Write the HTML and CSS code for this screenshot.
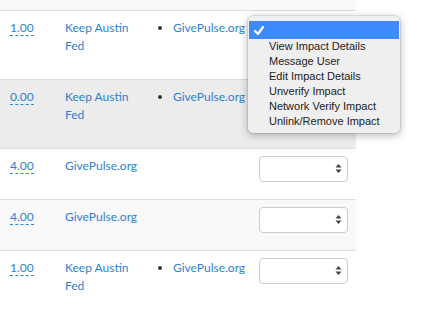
FILE: index.html
```html
<!DOCTYPE html>
<html lang="en">
<head>
  <meta charset="UTF-8">
  <title>Impacts</title>
  <link rel="stylesheet" href="styles.css">
</head>
<body>
  <div class="page">
    <table class="impacts">
      <colgroup>
        <col class="c-hours"><col class="c-org"><col class="c-links"><col class="c-action">
      </colgroup>
      <tr class="stub"><td colspan="4"></td></tr>
      <tr>
        <td><a class="hours">1.00</a></td>
        <td><a class="org tall">Keep Austin Fed</a></td>
        <td><ul class="links"><li><a>GivePulse.org</a></li></ul></td>
        <td><div class="select focused"><svg width="7" height="11" viewBox="0 0 7 11"><path d="M3.5 1 L6.5 4.5 H0.5 Z M3.5 10 L6.5 6.5 H0.5 Z" fill="#444"/></svg></div></td>
      </tr>
      <tr class="hover">
        <td><a class="hours">0.00</a></td>
        <td><a class="org tall">Keep Austin Fed</a></td>
        <td><ul class="links"><li><a>GivePulse.org</a></li></ul></td>
        <td><div class="select"><svg width="7" height="11" viewBox="0 0 7 11"><path d="M3.5 1 L6.5 4.5 H0.5 Z M3.5 10 L6.5 6.5 H0.5 Z" fill="#444"/></svg></div></td>
      </tr>
      <tr>
        <td><a class="hours">4.00</a></td>
        <td><a class="org">GivePulse.org</a></td>
        <td></td>
        <td><div class="select"><svg width="7" height="11" viewBox="0 0 7 11"><path d="M3.5 1 L6.5 4.5 H0.5 Z M3.5 10 L6.5 6.5 H0.5 Z" fill="#444"/></svg></div></td>
      </tr>
      <tr class="striped">
        <td><a class="hours">4.00</a></td>
        <td><a class="org">GivePulse.org</a></td>
        <td></td>
        <td><div class="select"><svg width="7" height="11" viewBox="0 0 7 11"><path d="M3.5 1 L6.5 4.5 H0.5 Z M3.5 10 L6.5 6.5 H0.5 Z" fill="#444"/></svg></div></td>
      </tr>
      <tr>
        <td><a class="hours">1.00</a></td>
        <td><a class="org tall">Keep Austin Fed</a></td>
        <td><ul class="links"><li><a>GivePulse.org</a></li></ul></td>
        <td><div class="select"><svg width="7" height="11" viewBox="0 0 7 11"><path d="M3.5 1 L6.5 4.5 H0.5 Z M3.5 10 L6.5 6.5 H0.5 Z" fill="#444"/></svg></div></td>
      </tr>
    </table>

    <ul class="menu">
      <li class="checked"><svg width="10" height="9" viewBox="0 0 10 9"><path d="M1 5 L4 8 L9 1" fill="none" stroke="#fff" stroke-width="2.2" stroke-linecap="round" stroke-linejoin="round"/></svg></li>
      <li>View Impact Details</li>
      <li>Message User</li>
      <li>Edit Impact Details</li>
      <li>Unverify Impact</li>
      <li>Network Verify Impact</li>
      <li>Unlink/Remove Impact</li>
    </ul>
  </div>
</body>
</html>
```

FILE: styles.css
```css
:root {
  --link: #2f7fd0;
  --line: #dddddd;
  --menu-bg: #efefef;
  --menu-hl: #3d8bfd;
}
* { margin: 0; padding: 0; box-sizing: border-box; }
body { background: #fff; font-family: 'Lato', 'Open Sans', sans-serif; font-size: 12px; color: #333; }
a { color: var(--link); text-decoration: none; }
.page { position: relative; width: 422px; height: 318px; overflow: hidden; }

.impacts { width: 356px; border-collapse: collapse; table-layout: fixed; }
.c-hours { width: 57px; }
.c-org { width: 88px; }
.c-links { width: 106px; }
.c-action { width: 105px; }
.impacts td { vertical-align: top; padding: 8px 8px 16px; line-height: 18px; border-top: 1px solid var(--line); }
.impacts td:first-child { padding-left: 10px; }
.impacts tr.stub td { height: 10px; padding: 0; border-top: none; background: #f9f9f9; }
.impacts tr.hover td { background: #ececec; }
.impacts tr.striped td { background: #f9f9f9; }

.hours { border-bottom: 1px dashed #2a8ad6; }
.org { display: block; }
.org.tall { margin-bottom: 8px; }
.links { padding-left: 20px; color: #333; }

.select { height: 26px; width: 89px; margin-top: -1px; margin-bottom: 1px; background: #fff; border: 1px solid #cccccc; border-radius: 4px; display: flex; align-items: center; justify-content: flex-end; padding-right: 5px; }
.select.focused { border-color: #66a3ee; box-shadow: 0 0 0 1px rgba(80,150,240,0.6); }

.menu { position: absolute; left: 248px; top: 16px; width: 152px; height: 117px; list-style: none; background: var(--menu-bg); border-radius: 5px; padding: 5px 1px 4px; box-shadow: 0 2px 8px rgba(0,0,0,0.3), 0 0 0 1px rgba(0,0,0,0.08); font-family: 'Liberation Sans', Arial, sans-serif; font-size: 11px; color: #222; }
.menu li { height: 15px; line-height: 15px; padding-left: 20px; white-space: nowrap; }
.menu li.checked { height: 18px; background: var(--menu-hl); padding-left: 5px; display: flex; align-items: center; }
```
